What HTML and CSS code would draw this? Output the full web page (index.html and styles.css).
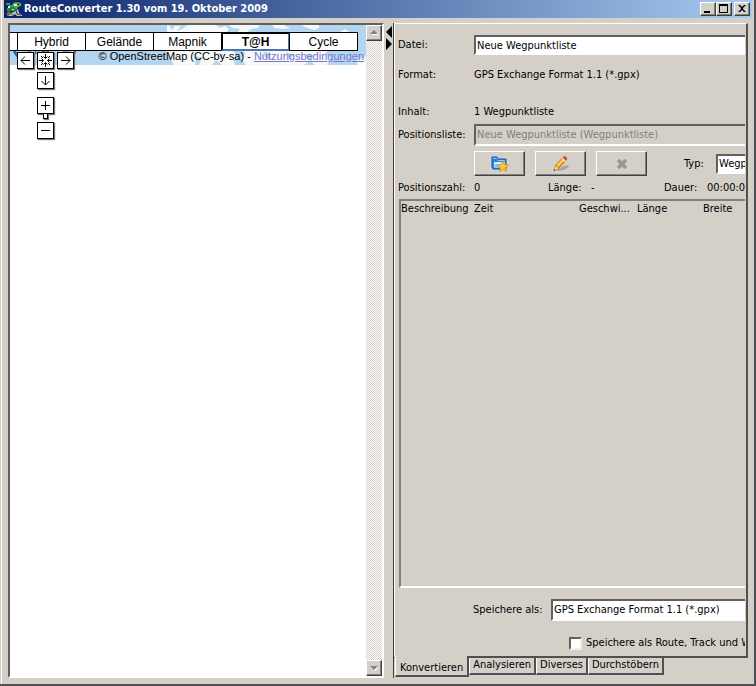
FILE: index.html
```html
<!DOCTYPE html>
<html lang="de">
<head>
<meta charset="utf-8">
<title>RouteConverter 1.30 vom 19. Oktober 2009</title>
<link rel="stylesheet" href="styles.css">
</head>
<body>
<div class="window">
  <header class="titlebar">
    <svg class="app-icon" width="16" height="16" viewBox="0 0 16 16" aria-hidden="true">
      <path d="M0 2h4v2h3v3H4v3H1V7h2V4H0z" fill="#3e9a45"/>
      <path d="M7 2l3-1 5 1v3l-3 1-2 3-3-1-1-3z" fill="#4fae48"/>
      <path d="M3 7l4-2 3 3-2 4-4 2-3-1z" fill="#267e3d"/>
      <path d="M8 3h3v2H8zM2 5h2v2H2zM6 8h2v1H6z" fill="#d9efe0"/>
      <path d="M11 3h2v1h-2zM4 10h3v1H4z" fill="#123b1d"/>
      <path d="M8 11l4-3 1 4 3 2v1h-5l-2-2-3 2H1l4-2z" fill="#b9c2c9"/>
      <path d="M10 9l1 4 4 1" stroke="#353c46" fill="none"/>
      <path d="M1 12l3 1-2 2zM5 13l2 1" stroke="#9a5b5c" fill="#9a5b5c"/>
    </svg>
    <h1 class="title">RouteConverter 1.30 vom 19. Oktober 2009</h1>
    <div class="window-buttons">
      <button class="win-btn" aria-label="Minimieren"><svg width="12" height="10"><path d="M2 7h6v2H2z"/></svg></button>
      <button class="win-btn" aria-label="Maximieren"><svg width="12" height="10"><path d="M1 0h9v9H1zM2 2v6h7V2z" fill-rule="evenodd"/></svg></button>
      <button class="win-btn close" aria-label="Schließen"><svg width="12" height="10"><path d="M2 1h2l2 2 2-2h2L7 4v1l3 3H8L6 6 4 8H2l3-3V4z"/></svg></button>
    </div>
  </header>
  <main class="split">
    <section class="map-pane" aria-label="Karte">
      <div class="map">
        <svg class="world" width="356" height="40" viewBox="0 0 356 40" aria-hidden="true">
          <path fill="#f7f8f8" d="M157 0h2l3 5 3-4h6l-4 5 5-2 6-4h28l4 3 5-2 4 3-2 3 6 2h-5l4 17 5 4-4 4 2 6h-13l-6-5-4 5h-38l-4-7-4-6 3-4-2-14z"/>
          <path fill="#f7f8f8" d="M236 40l-5-7 4-4-2-4h85l-3 4 6 4-4 7h-12l-5-4-6 4z"/>
          <path fill="#f7f8f8" d="M219 0h31l-2 3-7 1-5 4h-9l3-4-8-1zM262 0h12l6 3-7 1-8-1zM291 0h18v3l-5 2-9-3zM330 7l5-3 6 4zM346 36l10-5v9h-8z"/>
          <path fill="#b4d5f0" d="M209 28l5 2-2 5zM186 31l6 2-3 7h-4zM253 26l6 2 2 7-6-3zM276 27l7 3-3 5zM296 29l7 1-1 6-5-2z"/>
          <path d="M4 26l5 7 3-3M25 28l4-2M32 26l3 2M53 28h6" stroke="#2464cf" stroke-width="3" fill="none"/>
          <path d="M18 27l4 2M36 27h3M64 27h2" stroke="#d8362d" stroke-width="3"/>
          <path d="M26 27h3" stroke="#e9b631" stroke-width="2"/>
        </svg>
        <div class="map-types">
          <button class="map-type first" aria-label="Karte"></button>
          <button class="map-type">Hybrid</button>
          <button class="map-type">Gelände</button>
          <button class="map-type">Mapnik</button>
          <button class="map-type active">T@H</button>
          <button class="map-type">Cycle</button>
        </div>
        <p class="credit">© OpenStreetMap (CC-by-sa) - <a href="#terms">Nutzungsbedingungen</a></p>
        <div class="pan">
          <button class="nav left" aria-label="Nach links"><svg width="15" height="15"><path d="M3 7.500H12M7 3.500L3 7.500l4 4"/></svg></button>
          <button class="nav home" aria-label="Zentrieren"><svg width="15" height="15"><path d="M7.500 1v4M7.500 10v4M1 7.500h4M10 7.500h4M5.500 3.500l2 2 2-2M5.500 11.500l2-2 2 2M3.500 5.500l2 2-2 2M11.500 5.500l-2 2 2 2M3 3l2 2M12 3l-2 2M3 12l2-2M12 12l-2-2"/></svg></button>
          <button class="nav right" aria-label="Nach rechts"><svg width="15" height="15"><path d="M3 7.500h9M8 3.500l4 4-4 4"/></svg></button>
          <button class="nav down" aria-label="Nach unten"><svg width="15" height="15"><path d="M7.500 3v9M3.500 8l4 4 4-4"/></svg></button>
          <button class="nav in" aria-label="Vergrößern"><svg width="15" height="15"><path d="M3 7.500h9M7.500 3v9"/></svg></button>
          <span class="knob"></span>
          <button class="nav out" aria-label="Verkleinern"><svg width="15" height="15"><path d="M3 7.500h9"/></svg></button>
        </div>
      </div>
      <div class="scrollbar">
        <button class="scroll-btn" aria-label="Nach oben blättern"><svg width="12" height="12"><path d="M3 8h8L7 4z" fill="#fff"/><path d="M2 7h8L6 3z" fill="#808080"/></svg></button>
        <button class="scroll-btn" aria-label="Nach unten blättern"><svg width="12" height="12"><path d="M3 5h8L7 9z" fill="#fff"/><path d="M2 4h8L6 8z" fill="#808080"/></svg></button>
      </div>
    </section>
    <div class="divider">
      <svg width="7" height="24" aria-hidden="true"><path d="M6 0v12L0 6zM0 12v12l6-6z"/></svg>
    </div>
    <section class="side">
      <form class="panel">
        <div class="row row-file">
          <label class="name" for="file">Datei:</label>
          <input class="field" id="file" type="text" value="Neue Wegpunktliste">
        </div>
        <div class="row row-format"><span class="name">Format:</span><span>GPS Exchange Format 1.1 (*.gpx)</span></div>
        <div class="row row-content"><span class="name">Inhalt:</span><span>1 Wegpunktliste</span></div>
        <div class="row row-list">
          <label class="name" for="list">Positionsliste:</label>
          <select class="field tall" id="list" disabled><option>Neue Wegpunktliste (Wegpunktliste)</option></select>
        </div>
        <div class="row row-tools">
          <span class="name"></span>
          <button type="button" class="tool" aria-label="Neue Liste">
            <svg width="18" height="16" viewBox="0 0 18 16"><path d="M1 1h5l1 2h8v10H2L1 12z" fill="#2f7fe0" stroke="#1559ba"/><path d="M2 2h4v1H2zM7 4h7v1H7z" fill="#8fcbff"/><path d="M3 6h11v6H3z" fill="#d5ecff"/><path d="M4 8h9v4H3z" fill="#86c1fa"/><path d="M12 5l1.500 3.500 4 .5-3 2.500 1 4-3.500-2-3.500 2 1-4-3-2.500 4-.5z" fill="#ffc928" stroke="#dc8610" stroke-width=".7"/></svg>
          </button>
          <button type="button" class="tool" aria-label="Liste umbenennen">
            <svg width="18" height="16" viewBox="0 0 18 16"><path d="M4 14l8-4 4-1 1 2-5 3-6 1z" fill="#aaa69f"/><path d="M2 14.500l1.500-5L10 2.500l3 3-6.500 7z" fill="#f8a51d" stroke="#a85f10" stroke-width=".8"/><path d="M5 9l6-6 1 1-6 6z" fill="#ffe28a"/><path d="M10.500 2L12 .5l2 .5 1 2-1.500 2z" fill="#e44734" stroke="#b8372a" stroke-width=".5"/><path d="M9.500 2.500l1-1 3.500 3.500-1 1z" fill="#f1e2cf"/><path d="M2 14.500l1.200-4 3 2z" fill="#f8dfb8"/><path d="M1.800 15l.6-2 1.400 1z" fill="#333"/></svg>
          </button>
          <button type="button" class="tool" aria-label="Liste löschen" disabled>
            <svg width="14" height="14" viewBox="0 0 14 14"><path d="M3 3l8 8M11 3l-8 8" stroke="#969696" stroke-width="3.500"/></svg>
          </button>
          <label class="type-name" for="type">Typ:</label>
          <select class="field" id="type"><option>Wegpunktliste</option></select>
        </div>
        <div class="row row-stats">
          <span class="name">Positionszahl:</span><span class="count">0</span>
          <span class="length-name">Länge:</span><span class="length">-</span>
          <span class="duration-name">Dauer:</span><span>00:00:00</span>
        </div>
        <div class="positions">
          <table>
            <colgroup><col class="c-desc"><col class="c-time"><col class="c-speed"><col class="c-lon"><col></colgroup>
            <thead><tr><th>Beschreibung</th><th>Zeit</th><th>Geschwi...</th><th>Länge</th><th>Breite</th></tr></thead>
          </table>
        </div>
        <div class="row row-save">
          <label class="save-name" for="format">Speichere als:</label>
          <select class="field tall" id="format"><option>GPS Exchange Format 1.1 (*.gpx)</option></select>
        </div>
        <div class="row row-check">
          <input class="check" type="checkbox" id="split"><label for="split">Speichere als Route, Track und Wegpunktliste</label>
        </div>
      </form>
      <nav class="tabs">
        <button class="tab current">Konvertieren</button>
        <button class="tab">Analysieren</button>
        <button class="tab">Diverses</button>
        <button class="tab">Durchstöbern</button>
      </nav>
    </section>
  </main>
</div>
</body>
</html>
```
FILE: styles.css
```css
* { box-sizing: border-box; }
body {
  margin: 0;
  background: #d4d0c8;
  color: #000;
  font: 11px/16px "DejaVu Sans Condensed", "Noto Sans", sans-serif;
}
button, input, select { font: inherit; color: inherit; margin: 0; padding: 0; border-radius: 0; }
svg { display: block; flex: none; }

.window {
  display: flex;
  flex-direction: column;
  height: 100vh;
  padding: 0 2px 6px 4px;
  border-right: 2px solid #505050;
  border-bottom: 2px solid #505050;
  box-shadow: inset 1px 0 #d4d0c8, inset 2px 0 #fff;
}

.titlebar {
  display: flex;
  align-items: center;
  height: 18px;
  flex: none;
  padding: 0 2px;
  background: linear-gradient(to right, #0a246a, #a6caf0);
}
.title {
  flex: 1;
  margin: 0 0 0 2px;
  color: #fff;
  font: bold 11px/16px "DejaVu Sans Condensed", "Noto Sans", sans-serif;
  white-space: nowrap;
}
.window-buttons { display: flex; }
.win-btn, .scroll-btn {
  display: flex;
  justify-content: center;
  align-items: center;
  width: 16px;
  height: 14px;
  background: #d4d0c8;
  border: 1px solid;
  border-color: #fff #404040 #404040 #fff;
  box-shadow: inset -1px -1px #808080;
}
.win-btn.close { margin-left: 2px; }

.split {
  display: grid;
  grid-template-columns: minmax(0, 376fr) 9px minmax(0, 355fr);
  flex: 1;
  min-height: 0;
  padding: 5px 4px 0;
}

.map-pane {
  display: flex;
  min-height: 0;
  background: #fff;
  border: 2px solid;
  border-color: #606060 #fff #fff #606060;
}
.map {
  position: relative;
  flex: 1;
  overflow: hidden;
  font-family: "Liberation Sans", Arial, sans-serif;
}
.world { position: absolute; top: 0; left: 0; width: 100%; background: #b4d5f0; }
.map-types { position: relative; display: flex; margin-top: 7px; }
.map-type {
  flex: none;
  width: 69px;
  height: 19px;
  margin-right: -1px;
  background: #fff;
  border: 1px solid #000;
  font-size: 12px;
  line-height: 16px;
}
.map-type.first { width: 8px; border-left: 0; }
.map-type.active { border-width: 2px; border-color: #000 #4a72b8 #4a72b8 #000; font-weight: bold; line-height: 14px; }
.credit { position: relative; margin: 0; padding-right: 2px; text-align: right; line-height: 11px; white-space: nowrap; }
.credit a { color: #7777cc; }
.pan {
  position: absolute;
  top: 27px;
  left: 7px;
  display: grid;
  grid-template-columns: repeat(3, 17px);
  grid-template-rows: 17px 17px 17px 2px 17px;
  gap: 3px;
}
.nav { display: flex; width: 17px; height: 17px; background: #fff; border: 1px solid #000; box-shadow: 1px 1px 1px #777; }
.nav path { stroke: #000; fill: none; }
.down, .in, .knob, .out { grid-column: 2; }
.in { margin-top: 5px; }
.knob { width: 5px; height: 5px; margin: 2px 0 0 6px; border: 1px solid #000; border-top: 0; background: #fff; box-shadow: 1px 1px 1px #777; }
.out { margin-top: 5px; }

.scrollbar {
  display: flex;
  flex-direction: column;
  justify-content: space-between;
  width: 16px;
  background: repeating-conic-gradient(#d4d0c8 0 25%, #fff 0 50%) 0 0 / 2px 2px;
}
.scroll-btn { width: 16px; height: 16px; }

.divider { padding: 3px 0 0 2px; }

.side {
  display: flex;
  flex-direction: column;
  min-width: 0;
  min-height: 0;
  border-left: 1px solid #404040;
}
.panel {
  display: flex;
  flex-direction: column;
  flex: 1;
  min-height: 0;
  margin: 0;
  padding: 10px 1px 5px 3px;
  overflow: hidden;
  border: 2px solid;
  border-width: 1px 2px 2px 1px;
  border-color: #fff #505050 #505050 #fff;
}
.row { display: flex; align-items: center; flex: none; min-width: 0; white-space: nowrap; overflow: hidden; }
.name { flex: none; width: 76px; }
.field {
  appearance: none;
  flex: 1;
  min-width: 0;
  height: 20px;
  padding-left: 1px;
  background: #fff;
  border: 2px solid;
  border-color: #606060 #fff #fff #606060;
  border-right: 0;
  outline: 0;
}
.field.tall { height: 22px; }
.field:disabled { background: #d4d0c8; color: #808080; opacity: 1; }
.row-file { margin-top: 1px; }
.row-format { margin-top: 12px; }
.row-content { margin-top: 21px; }
.row-list { margin-top: 4px; }
.row-tools { margin-top: 5px; height: 25px; }
.tool {
  display: flex;
  justify-content: center;
  align-items: center;
  flex: none;
  width: 51px;
  height: 25px;
  margin-right: 10px;
  background: #d4d0c8;
  border: 1px solid;
  border-color: #fff #404040 #404040 #fff;
  box-shadow: inset -1px -1px #808080;
}
.type-name { flex: none; width: 32px; margin-left: 27px; }
.row-stats { margin-top: 4px; }
.count { flex: none; width: 74px; }
.length-name { flex: none; width: 43px; }
.length { flex: none; width: 73px; }
.duration-name { flex: none; width: 43px; }
.positions {
  flex: 1;
  min-height: 0;
  margin: 3px 0 11px 1px;
  overflow: hidden;
  border: 2px solid;
  border-color: #808080 #fff #fff #808080;
  border-right: 0;
}
table { width: 100%; table-layout: fixed; border-collapse: collapse; }
th { padding: 0; font-weight: normal; text-align: left; white-space: nowrap; }
.c-desc { width: 73px; }
.c-time { width: 105px; }
.c-speed { width: 58px; }
.c-lon { width: 66px; }
.save-name { flex: none; width: 78px; margin-left: 75px; }
.row-check { margin-top: 14px; padding-left: 171px; }
.check {
  appearance: none;
  flex: none;
  width: 13px;
  height: 13px;
  margin-right: 4px;
  background: #fff;
  border: 2px solid;
  border-color: #606060 #eee #eee #606060;
}

.tabs { display: flex; align-items: flex-start; flex: none; height: 20px; padding-left: 1px; }
.tab {
  height: 17px;
  padding: 0 3px 1px;
  background: #d4d0c8;
  border: 0 solid;
  border-width: 0 2px 2px 1px;
  border-color: #404040 #505050 #505050 #fff;
  line-height: 14px;
}
.tab.current { position: relative; height: 21px; margin-top: -2px; padding: 4px 4px 0; }
```
